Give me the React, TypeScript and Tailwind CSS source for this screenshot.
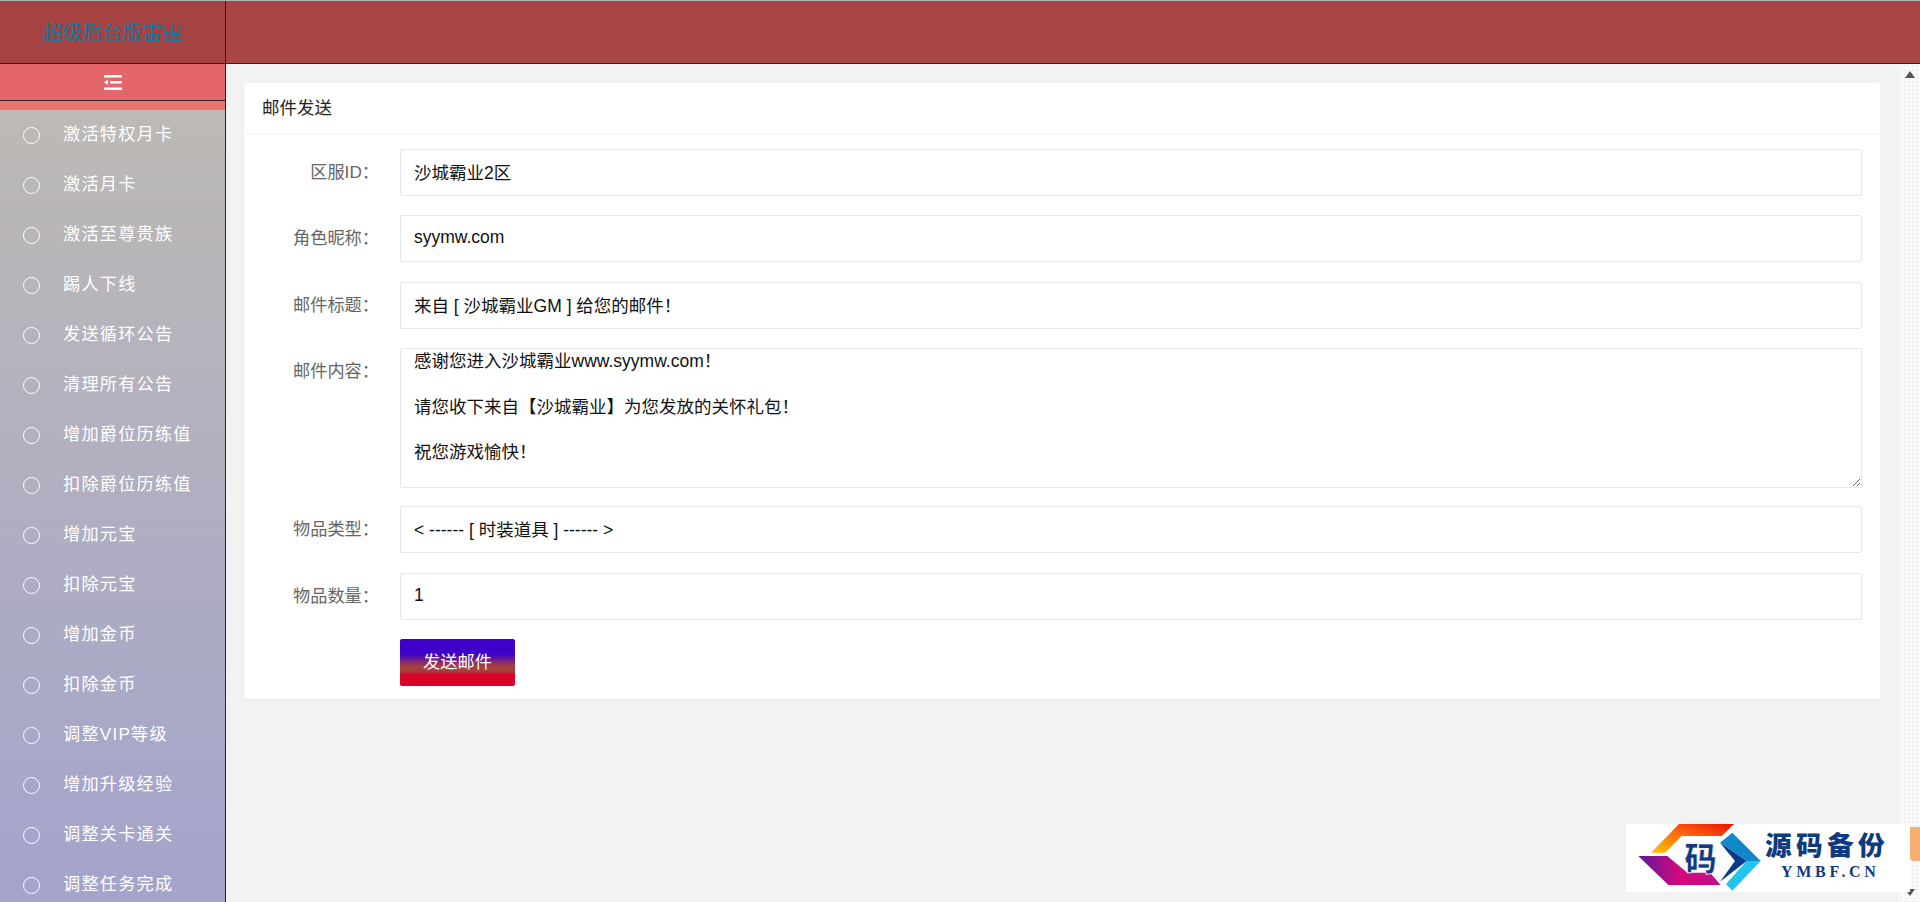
import { useLayoutEffect, useRef } from 'react';

const menu = [
    '激活特权月卡', '激活月卡', '激活至尊贵族', '踢人下线', '发送循环公告', '清理所有公告', '增加爵位历练值', '扣除爵位历练值',
    '增加元宝', '扣除元宝', '增加金币', '扣除金币', '调整VIP等级', '增加升级经验', '调整关卡通关', '调整任务完成',
];

const mailBody = '感谢您进入沙城霸业www.syymw.com！\n\n请您收下来自【沙城霸业】为您发放的关怀礼包！\n\n祝您游戏愉快！\n\n\n';

function Field({ label, value }: { label: string; value: string }) {
    return (
        <div className="flex mb-[19.4px]">
            <label className="w-[135px] shrink-0 text-right text-[#666] leading-[47px]">{label}</label>
            <div className="ml-[21px] flex-1">
                <input
                    readOnly
                    value={value}
                    className="w-full h-[47px] px-[13px] pb-[2px] border border-[#e6e6e6] rounded-[2px] bg-white text-[17.5px] text-[#111] outline-none"
                />
            </div>
        </div>
    );
}

function Logo() {
    return (
        <svg viewBox="78 132 852 204" className="absolute right-[10px] bottom-[10px] w-[284px] h-[68px] bg-white">
            <defs>
                <linearGradient id="orange" x1="0" y1="1" x2="1" y2="0">
                    <stop offset="0" stopColor="#ffc400" />
                    <stop offset="0.5" stopColor="#ff6a10" />
                    <stop offset="1" stopColor="#e81200" />
                </linearGradient>
                <linearGradient id="purple" x1="0" y1="0" x2="1" y2="0">
                    <stop offset="0" stopColor="#5a1a9c" />
                    <stop offset="0.5" stopColor="#d4087c" />
                    <stop offset="1" stopColor="#c0108c" />
                </linearGradient>
            </defs>
            <polygon points="153,218 237,132 402,132 365,168 245,168 195,218" fill="url(#orange)" />
            <polygon points="115,228 202,228 262,278 330,278 362,315 205,315" fill="url(#purple)" />
            <polygon points="397,158 482,243 440,243 360,188" fill="#1288c8" />
            <polygon points="482,243 397,332 378,312 440,243" fill="#22c4ec" />
            <polygon points="360,188 440,243 360,305 405,243" fill="#0a3a8c" />
            <text x="302" y="274" textAnchor="middle" fontSize="98" fontWeight="900" fill="#123a80" stroke="#fff" strokeWidth="2" fontFamily="'Noto Sans CJK SC', sans-serif">码</text>
            <text x="681" y="226" textAnchor="middle" fontSize="80" fontWeight="900" letterSpacing="13" fill="#0f3a80" fontFamily="'Noto Sans CJK SC', sans-serif">源码备份</text>
            <text x="691" y="290" textAnchor="middle" fontSize="48" fontWeight="700" letterSpacing="11" fill="#0f3a80" fontFamily="'Liberation Serif', serif">YMBF.CN</text>
        </svg>
    );
}

export default function App() {
    const areaRef = useRef<HTMLTextAreaElement>(null);

    useLayoutEffect(() => {
        if (areaRef.current) areaRef.current.scrollTop = 5;
    }, []);

    return (
        <div className="relative h-screen overflow-hidden flex flex-col bg-[#f2f2f2] text-[17.2px] font-['Liberation_Sans','Noto_Sans_CJK_SC',sans-serif]">
            <header className="h-[64px] shrink-0 flex border-t border-t-[#b4b4b4] border-b border-b-[#2c2028] bg-[#a94545]">
                <div className="w-[226px] shrink-0 flex items-center justify-center border-r border-r-[#2c2028] bg-[#a54343] pt-[2px] text-[20px] text-[#15759a]">
                    超级后台版雷霆
                </div>
            </header>

            <div className="flex flex-1 min-h-0">
                <aside className="w-[226px] shrink-0 flex flex-col border-r border-r-[#2c2028] overflow-hidden">
                    <div className="h-[37px] shrink-0 flex items-center justify-center border-b border-b-[#2c2028] bg-[#e4656a]">
                        <svg width="18" height="15" viewBox="0 0 18 15" fill="white">
                            <rect x="0" y="0" width="18" height="2.5" />
                            <rect x="6" y="6" width="12" height="2.5" />
                            <rect x="0" y="12.5" width="18" height="2.5" />
                            <polygon points="0,7.25 4,4.5 4,10" />
                        </svg>
                    </div>
                    <div className="h-[9px] shrink-0 bg-[#e8766e]" />
                    <ul className="flex-1 bg-gradient-to-b from-[#bdb9b5] to-[#a3a3cc]">
                        {menu.map((item) => (
                            <li key={item} className="h-[50px] flex items-center pl-[23px] text-white tracking-[1.2px]">
                                <span className="w-[17px] h-[17px] rounded-full border-[1.5px] border-white shrink-0" />
                                <span className="ml-[23px] whitespace-nowrap">{item}</span>
                            </li>
                        ))}
                    </ul>
                </aside>

                <main className="flex-1 min-w-0 pt-[19px] pl-[18px] pr-[19px]">
                    <section className="bg-white rounded-[2px] shadow-[0_1px_2px_rgba(0,0,0,0.05)]">
                        <div className="h-[52px] flex items-center px-[18px] border-b border-b-[#f4f4f4] text-[17.5px] text-[#222]">邮件发送</div>
                        <div className="pt-[14px] pr-[18px] pb-[13px]">
                            <Field label="区服ID：" value="沙城霸业2区" />
                            <Field label="角色昵称：" value="syymw.com" />
                            <Field label="邮件标题：" value="来自 [ 沙城霸业GM ] 给您的邮件！" />
                            <div className="flex mb-[18px]">
                                <label className="w-[135px] shrink-0 text-right text-[#666] leading-[47px]">邮件内容：</label>
                                <div className="ml-[21px] flex-1">
                                    <textarea
                                        ref={areaRef}
                                        readOnly
                                        defaultValue={mailBody}
                                        className="block w-full h-[140px] px-[13px] py-[6px] border border-[#e6e6e6] rounded-[2px] bg-white text-[17.5px] text-[#111] leading-[22.7px] outline-none resize-y [scrollbar-width:none]"
                                    />
                                </div>
                            </div>
                            <Field label="物品类型：" value="< ------ [ 时装道具 ] ------ >" />
                            <Field label="物品数量：" value="1" />
                            <div className="ml-[156px]">
                                <button className="w-[115px] h-[47px] rounded-[2px] text-white bg-[linear-gradient(#3f00c9_0%,#3f00c9_32%,#a5403f_58%,#a5403f_68%,#d9002a_77%,#d9002a_100%)]">
                                    发送邮件
                                </button>
                            </div>
                        </div>
                    </section>
                </main>

                <div className="w-[21px] shrink-0 flex flex-col items-center justify-between pt-[7px] pb-[6px] bg-[#fafafa] bg-[radial-gradient(#efefef_1px,transparent_1px)] bg-[length:4px_4px]">
                    <svg width="10" height="7" viewBox="0 0 10 7" fill="#555"><polygon points="5,0 10,7 0,7" /></svg>
                    <svg width="10" height="7" viewBox="0 0 10 7" fill="#555"><polygon points="0,0 10,0 5,7" /></svg>
                </div>
            </div>

            <div className="absolute right-0 top-[827px] w-[10px] h-[34px] rounded-bl-[4px] bg-[#f5b070]" />
            <Logo />
        </div>
    );
}
